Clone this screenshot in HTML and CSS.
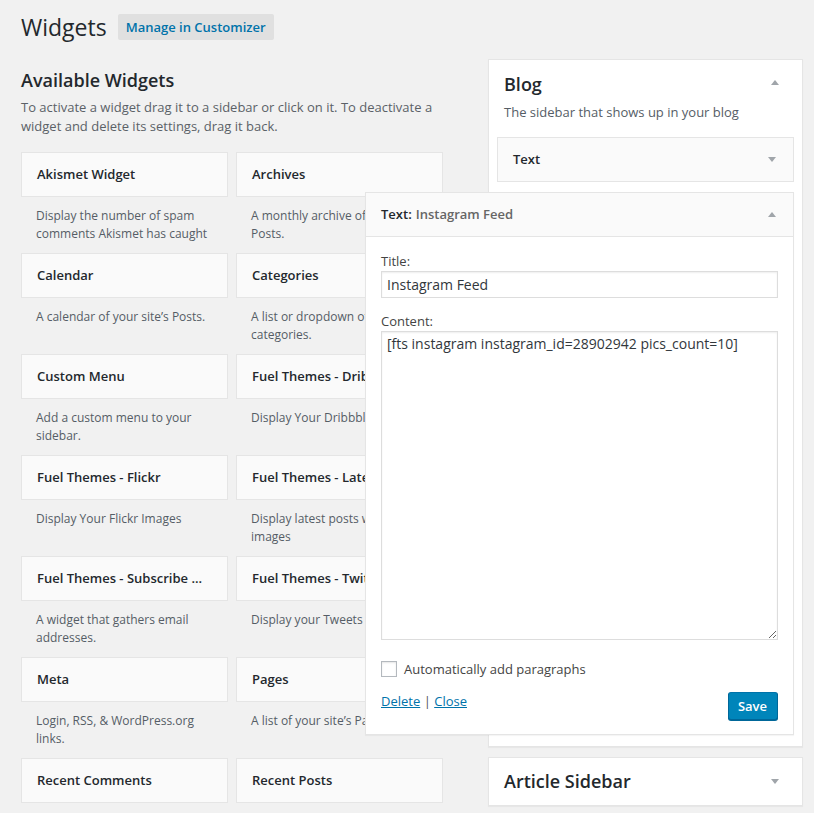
FILE: index.html
```html
<!DOCTYPE html>
<html lang="en">
<head>
<meta charset="utf-8">
<title>Widgets</title>
<link rel="stylesheet" href="styles.css">
</head>
<body>
<div class="wrap">
  <div class="page-header">
    <h1>Widgets</h1>
    <span class="btn-customize">Manage in Customizer</span>
  </div>
  <div class="columns">
    <div class="left">
      <h2>Available Widgets</h2>
      <p class="intro">To activate a widget drag it to a sidebar or click on it. To deactivate a widget and delete its settings, drag it back.</p>
      <div class="grid">
        <div class="item"><div class="card">Akismet Widget</div><div class="desc">Display the number of spam comments Akismet has caught</div></div>
        <div class="item"><div class="card">Archives</div><div class="desc">A monthly archive of your site’s Posts.</div></div>
        <div class="item"><div class="card">Calendar</div><div class="desc">A calendar of your site’s Posts.</div></div>
        <div class="item"><div class="card">Categories</div><div class="desc">A list or dropdown of categories.</div></div>
        <div class="item"><div class="card">Custom Menu</div><div class="desc">Add a custom menu to your sidebar.</div></div>
        <div class="item"><div class="card">Fuel Themes - Dribbble</div><div class="desc">Display Your Dribbble Shots</div></div>
        <div class="item"><div class="card">Fuel Themes - Flickr</div><div class="desc">Display Your Flickr Images</div></div>
        <div class="item"><div class="card">Fuel Themes - Latest Posts</div><div class="desc">Display latest posts with images</div></div>
        <div class="item"><div class="card">Fuel Themes - Subscribe ...</div><div class="desc">A widget that gathers email addresses.</div></div>
        <div class="item"><div class="card">Fuel Themes - Twitter</div><div class="desc">Display your Tweets</div></div>
        <div class="item"><div class="card">Meta</div><div class="desc">Login, RSS, &amp; WordPress.org links.</div></div>
        <div class="item"><div class="card">Pages</div><div class="desc">A list of your site’s Pages.</div></div>
        <div class="item"><div class="card">Recent Comments</div></div>
        <div class="item"><div class="card">Recent Posts</div></div>
      </div>
    </div>
    <div class="right">
      <div class="sidebar sidebar-blog">
        <div class="sb-head"><h2>Blog</h2><span class="arrow-up"></span></div>
        <p class="sb-desc">The sidebar that shows up in your blog</p>
        <div class="widget-top in-sidebar"><span>Text</span><span class="arrow-down"></span></div>
      </div>
      <div class="sidebar sidebar-article">
        <h2>Article Sidebar</h2><span class="arrow-down"></span>
      </div>
    </div>
  </div>

  <div class="edit-widget">
    <div class="edit-top"><div class="edit-title"><span>Text:</span><span class="in-title">Instagram Feed</span></div><span class="arrow-up"></span></div>
    <div class="edit-body">
      <label class="field-label">Title:</label>
      <input class="text-input" type="text" value="Instagram Feed">
      <label class="field-label content-label">Content:</label>
      <textarea class="text-area">[fts instagram instagram_id=28902942 pics_count=10]</textarea>
      <div class="check-row"><span class="checkbox"></span><span>Automatically add paragraphs</span></div>
      <div class="actions">
        <div class="links"><a href="#">Delete</a> <span class="sep">|</span> <a href="#">Close</a></div>
        <span class="btn-save">Save</span>
      </div>
    </div>
  </div>
</div>
</body>
</html>
```
FILE: styles.css
```css
html, body {
  margin: 0;
  background: #f1f1f1;
  overflow: hidden;
}
body {
  font-family: "Open Sans", "DejaVu Sans", sans-serif;
  font-size: 13px;
  color: #444;
}
.wrap {
  position: relative;
  height: 813px;
  overflow: hidden;
  box-sizing: border-box;
  padding: 10px 0 0 21px;
}
.page-header {
  display: flex;
  align-items: center;
  gap: 11px;
  height: 34px;
}
.page-header h1 {
  margin: 0;
  font-size: 23px;
  font-weight: 400;
  line-height: 29px;
  color: #23282d;
}
.btn-customize {
  display: inline-block;
  background: #e0e0e0;
  color: #0073aa;
  font-weight: 600;
  font-size: 13px;
  height: 26px;
  line-height: 26px;
  padding: 0 8px;
  border-radius: 2px;
}
.columns {
  display: flex;
  align-items: flex-start;
  gap: 45px;
  margin-top: 15px;
}
.left {
  width: 422px;
  flex: none;
}
.left h2 {
  margin: 9px 0 6px;
  font-size: 18px;
  font-weight: 600;
  line-height: 24px;
  color: #23282d;
}
.intro {
  margin: 0 0 16px;
  font-size: 13px;
  line-height: 19px;
  color: #5b6167;
}
.grid {
  display: grid;
  grid-template-columns: 207px 207px;
  column-gap: 8px;
}
.item {
  height: 101px;
}
.card {
  box-sizing: border-box;
  height: 45px;
  line-height: 43px;
  padding: 0 15px;
  border: 1px solid #e5e5e5;
  background: #fafafa;
  font-weight: 600;
  color: #23282d;
  white-space: nowrap;
  overflow: hidden;
}
.desc {
  padding: 10px 15px 0;
  font-size: 12px;
  line-height: 18px;
  color: #555d66;
}
.right {
  width: 315px;
  flex: none;
}
.sidebar {
  box-sizing: border-box;
  background: #fff;
  border: 1px solid #e5e5e5;
  box-shadow: 0 1px 1px rgba(0,0,0,.04);
}
.sidebar-blog {
  height: 688px;
}
.sb-head {
  display: flex;
  justify-content: space-between;
  align-items: center;
  padding: 12px 23px 0 15px;
}
.sidebar h2 {
  margin: 0;
  font-size: 18px;
  font-weight: 600;
  line-height: 24px;
  color: #23282d;
}
.sb-head .arrow-up {
  margin-top: -4px;
}
.sb-desc {
  margin: 7px 15px 0;
  line-height: 18px;
  color: #555d66;
}
.widget-top {
  box-sizing: border-box;
  height: 45px;
  display: flex;
  justify-content: space-between;
  align-items: center;
  padding: 0 17px 0 15px;
  border: 1px solid #e5e5e5;
  background: #fafafa;
  font-weight: 600;
  color: #23282d;
}
.widget-top span:first-child {
  margin-top: -1px;
}
.in-sidebar {
  margin: 16px 8px 0;
}
.sidebar-article {
  margin-top: 10px;
  height: 49px;
  display: flex;
  justify-content: space-between;
  align-items: center;
  padding: 0 23px 1px 15px;
}
.arrow-up, .arrow-down {
  display: inline-block;
  width: 0;
  height: 0;
  border-left: 4px solid transparent;
  border-right: 4px solid transparent;
}
.arrow-up {
  border-bottom: 5px solid #a0a5aa;
}
.arrow-down {
  border-top: 5px solid #a0a5aa;
}
.edit-widget {
  position: absolute;
  left: 365px;
  top: 192px;
  width: 429px;
  box-sizing: border-box;
  background: #fff;
  border: 1px solid #e5e5e5;
  box-shadow: 0 1px 1px rgba(0,0,0,.04);
}
.edit-top {
  height: 43px;
  display: flex;
  justify-content: space-between;
  align-items: center;
  padding: 0 17px 0 15px;
  background: #fafafa;
  border-bottom: 1px solid #e5e5e5;
  font-weight: 600;
  color: #23282d;
}
.edit-title {
  display: flex;
  gap: 4px;
  margin-top: -1px;
}
.in-title {
  color: #666;
}
.edit-body {
  padding: 15px 15px 14px;
}
.field-label {
  display: block;
  line-height: 18px;
  color: #444;
}
.content-label {
  margin-top: 14px;
}
.text-input, .text-area {
  display: block;
  box-sizing: border-box;
  width: 100%;
  margin: 1px 0 0;
  border: 1px solid #ddd;
  box-shadow: inset 0 1px 2px rgba(0,0,0,.07);
  background: #fff;
  font-family: "Open Sans", "DejaVu Sans", sans-serif;
  font-size: 14px;
  color: #32373c;
  outline: none;
  border-radius: 0;
}
.text-input {
  height: 27px;
  padding: 0 5px;
}
.text-area {
  height: 309px;
  padding: 2px 5px;
  line-height: 20px;
  resize: vertical;
}
.check-row {
  display: flex;
  align-items: center;
  margin-top: 21px;
  height: 16px;
  line-height: 18px;
  color: #444;
}
.checkbox {
  box-sizing: border-box;
  width: 16px;
  height: 16px;
  margin-right: 7px;
  border: 1px solid #b4b9be;
  background: #fff;
  box-shadow: inset 0 1px 2px rgba(0,0,0,.1);
}
.actions {
  display: flex;
  justify-content: space-between;
  align-items: flex-start;
  margin-top: 15px;
}
.links {
  line-height: 18px;
}
.links a {
  color: #0073aa;
  text-decoration: underline;
}
.sep {
  color: #555;
}
.btn-save {
  box-sizing: border-box;
  height: 28px;
  line-height: 26px;
  padding: 0 10px 0 9px;
  background: #0085ba;
  border: 1px solid #0073aa;
  border-color: #0073aa #006799 #006799;
  box-shadow: 0 1px 0 #006799;
  border-radius: 3px;
  color: #fff;
  font-weight: 600;
}
```
